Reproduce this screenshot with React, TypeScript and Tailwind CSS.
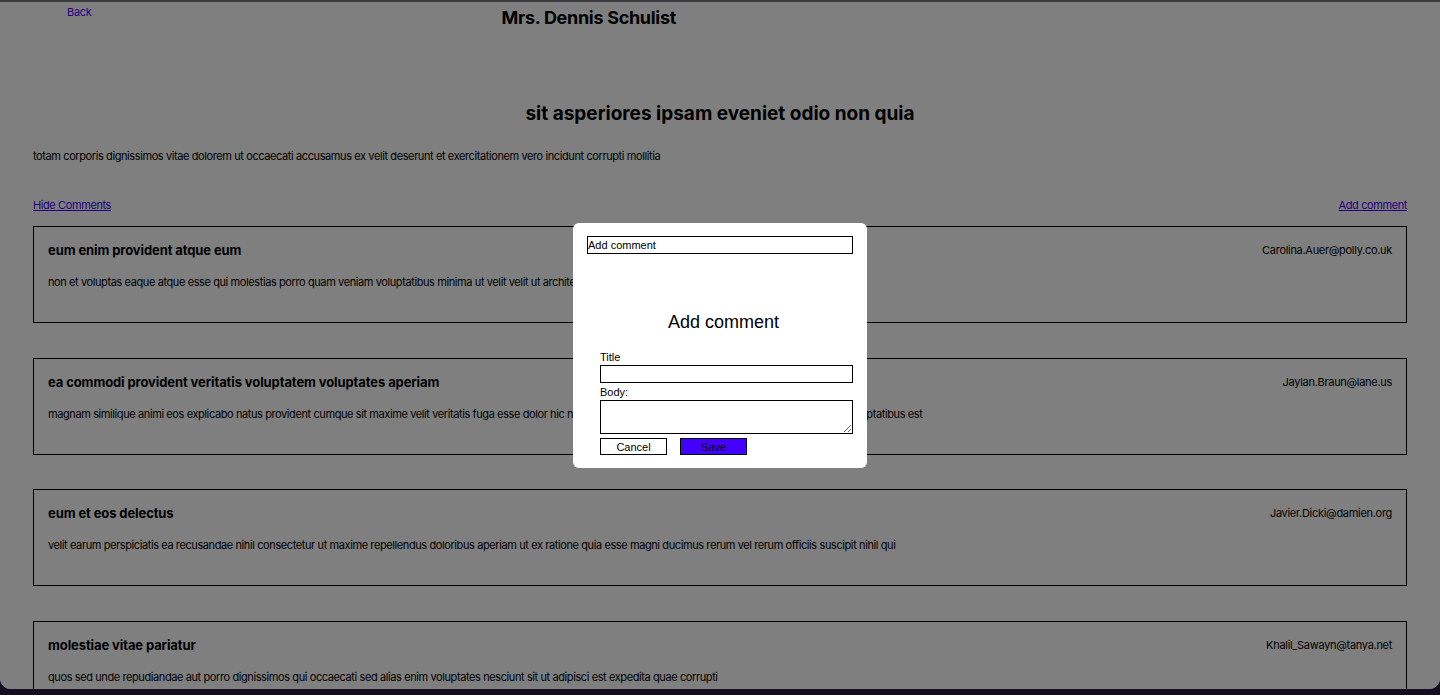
import React from 'react';

const COMMENTS = [
  {
    id: 1,
    title: 'eum enim provident atque eum',
    email: 'Carolina.Auer@polly.co.uk',
    body: 'non et voluptas eaque atque esse qui molestias porro quam veniam voluptatibus minima ut velit velit ut architecto quia eum illum',
  },
  {
    id: 2,
    title: 'ea commodi provident veritatis voluptatem voluptates aperiam',
    email: 'Jaylan.Braun@lane.us',
    body: 'magnam similique animi eos explicabo natus provident cumque sit maxime velit veritatis fuga esse dolor hic nihil nesciunt assumenda ut animi ducimus omnis dolores voluptatibus est',
  },
  {
    id: 3,
    title: 'eum et eos delectus',
    email: 'Javier.Dicki@damien.org',
    body: 'velit earum perspiciatis ea recusandae nihil consectetur ut maxime repellendus doloribus aperiam ut ex ratione quia esse magni ducimus rerum vel rerum officiis suscipit nihil qui',
  },
  {
    id: 4,
    title: 'molestiae vitae pariatur',
    email: 'Khalil_Sawayn@tanya.net',
    body: 'quos sed unde repudiandae aut porro dignissimos qui occaecati sed alias enim voluptates nesciunt sit ut adipisci est expedita quae corrupti',
  },
];

const CommentCard: React.FC<{ title: string; email: string; body: string }> = ({ title, email, body }) => (
  <div className="border border-black h-[97px] px-[14px] pt-[14px] mb-[34.5px]">
    <div className="flex justify-between items-center">
      <h3 className="text-[13px] font-bold leading-[18px] tracking-[-0.1px]">{title}</h3>
      <span className="text-[11px] leading-[16px] tracking-[-0.3px]">{email}</span>
    </div>
    <p className="text-[11px] leading-[16px] mt-[15px] tracking-[-0.4px]">{body}</p>
  </div>
);

const AddCommentModal: React.FC = () => (
  <div className="absolute inset-0 flex items-center justify-center">
    <div
      className="w-[294px] h-[245px] bg-white rounded-[6px] px-[14px] pt-[13px] text-black"
      style={{ fontFamily: "'Liberation Sans', Arial, sans-serif" }}
    >
      <div className="h-[18px] border border-black text-[11px] leading-[16px]">Add comment</div>
      <h2 className="text-center text-[18px] leading-[22px] mt-[57px] ml-[7px]">Add comment</h2>
      <form className="pl-[13px] mt-[18px] flex flex-col">
        <label className="text-[11px] leading-[12px]">Title</label>
        <input className="h-[18px] border border-black mt-[2px] outline-none" />
        <label className="text-[11px] leading-[12px] mt-[3px]">Body:</label>
        <textarea className="h-[34px] border border-black mt-[2px] resize-y outline-none" />
        <div className="flex gap-[13px] mt-[4px]">
          <button type="button" className="w-[67px] h-[17px] border border-black bg-white text-[11px] leading-[14px]">
            Cancel
          </button>
          <button type="button" className="w-[67px] h-[17px] border border-black bg-[#4400ff] text-[11px] leading-[14px]">
            Save
          </button>
        </div>
      </form>
    </div>
  </div>
);

export default function App() {
  return (
    <div className="h-[695px] bg-[#130e1f] overflow-hidden">
      <div
        className="relative h-[689px] bg-white border-t-2 border-[#3b3b3f] rounded-b-[11px] overflow-hidden text-black"
        style={{ fontFamily: "Inter, 'Noto Sans', sans-serif" }}
      >
        <header className="flex items-start">
          <a className="ml-[67px] mt-[2px] text-[11px] leading-[16px] tracking-[-0.3px] text-[#4400ff] cursor-pointer">Back</a>
          <h1 className="ml-[410px] mt-[4px] text-[18px] font-bold leading-[24px] tracking-[-0.3px]">Mrs. Dennis Schulist</h1>
        </header>

        <main className="px-[33px]">
          <h2 className="text-center text-[19px] font-bold leading-[24px] mt-[72px]">
            sit asperiores ipsam eveniet odio non quia
          </h2>
          <p className="text-[11px] leading-[16px] mt-[22px] tracking-[-0.4px]">
            totam corporis dignissimos vitae dolorem ut occaecati accusamus ex velit deserunt et exercitationem vero incidunt corrupti mollitia
          </p>

          <div className="flex justify-between mt-[33px] mb-[13px]">
            <a className="text-[11px] leading-[16px] tracking-[-0.4px] text-[#4400ff] underline cursor-pointer">Hide Comments</a>
            <a className="text-[11px] leading-[16px] tracking-[-0.4px] text-[#4400ff] underline cursor-pointer">Add comment</a>
          </div>

          {COMMENTS.map((c) => (
            <CommentCard key={c.id} title={c.title} email={c.email} body={c.body} />
          ))}
        </main>

        <div className="absolute inset-0 bg-black/50" />
        <AddCommentModal />
      </div>
    </div>
  );
}
